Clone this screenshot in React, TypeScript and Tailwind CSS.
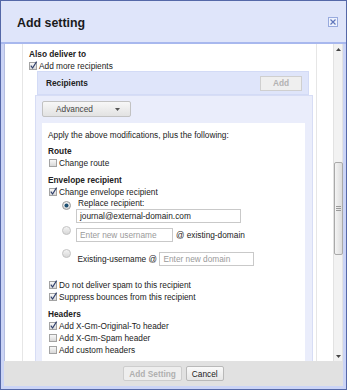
import React from 'react';

const Check = ({ on }: { on?: boolean }) => (
  <span className="relative w-[8px] h-[8px] shrink-0 border border-[#a3a3a3] bg-linear-to-b from-[#f8f8f8] to-[#d8d8d8]">
    {on && (
      <svg className="absolute -top-[2px] -left-px" width="9" height="9" viewBox="0 0 9 9">
        <path d="M1.8 4.6 L3.6 7 L7.6 0.6" fill="none" stroke="#33436e" strokeWidth="1.2" />
      </svg>
    )}
  </span>
);

const Radio = ({ on, className = '' }: { on?: boolean; className?: string }) => (
  <svg className={`shrink-0 ${className}`} width="9" height="9" viewBox="0 0 9 9">
    <defs>
      <linearGradient id="rg" x1="0" y1="0" x2="0" y2="1">
        <stop offset="0" stopColor="#f6f6f6" />
        <stop offset="1" stopColor="#d6d6d6" />
      </linearGradient>
    </defs>
    <circle cx="4.5" cy="4.5" r="4" fill="url(#rg)" stroke={on ? '#9a9a9a' : '#c4c4c4'} strokeWidth="1" />
    {on && <circle cx="4.5" cy="4.5" r="2" fill="#1d4f72" />}
  </svg>
);

const CheckRow = ({ on, label, className = '' }: { on?: boolean; label: string; className?: string }) => (
  <div className={`flex items-center h-[12px] ${className}`}>
    <Check on={on} />
    <span className="ml-[2px] whitespace-nowrap">{label}</span>
  </div>
);

const Field = ({ value, placeholder, className = '' }: { value?: string; placeholder?: string; className?: string }) => (
  <div className={`h-[14px] border border-[#c9c9c9] bg-white flex items-center pl-[3px] whitespace-nowrap ${className}`}>
    {value ? <span className="text-[#222]">{value}</span> : <span className="text-[#9a9a9a]">{placeholder}</span>}
  </div>
);

export default function App() {
  return (
    <div className="w-[347px] h-[390px] bg-[#5568a8] p-px font-['Liberation_Sans',Arial,sans-serif] text-[8.3px] leading-[12px] text-[#222]">
      <div className="h-full bg-[#cbd4f6] flex flex-col">
        {/* Header */}
        <div className="h-[43px] shrink-0 bg-[#dfe5fa] border-b-2 border-[#a8b8ee] flex items-center justify-between pl-[16px] pr-[8px] pt-[3px]">
          <span className="text-[12.4px] font-bold text-[#1a1a1a] leading-[14px]">Add setting</span>
          <div className="w-[10px] h-[10px] -mt-[3px] border border-[#98aade] bg-[#eef2fd] flex items-center justify-center">
            <svg width="6" height="6" viewBox="0 0 6 6">
              <path d="M0.5 0.5 L5.5 5.5 M5.5 0.5 L0.5 5.5" stroke="#5f76bb" strokeWidth="1.2" />
            </svg>
          </div>
        </div>

        {/* Scrolling content */}
        <div className="mx-[3px] h-[317px] shrink-0 bg-white border-l border-[#b6bfdf] flex overflow-hidden">
          <div className="w-[17px] shrink-0" />
          <div className="w-[295px] shrink-0 border-x border-[#e6e6e6] pt-[4px]">
            <div className="pl-[6px] font-bold">Also deliver to</div>
            <div className="pl-[6px] flex items-center h-[11px]">
              <Check on />
              <span className="ml-[2px]">Add more recipients</span>
            </div>

            {/* Recipients header */}
            <div className="ml-[14px] w-[272px] h-[24px] bg-[#dfe5fa] border border-[#d3dbf6] flex items-center justify-between pl-[8px] pr-[6px]">
              <span className="font-bold">Recipients</span>
              <div className="w-[42px] h-[15px] border border-[#cfcfcf] bg-[#efefef] flex items-center justify-center font-bold text-[#b3b3b3]">
                Add
              </div>
            </div>

            {/* Recipient details */}
            <div className="ml-[12px] w-[278px] h-[300px] bg-[#eaedfb] border border-[#d7ddf5] pl-[6px] pt-[5px]">
              <div className="w-[89px] h-[16px] border border-[#c2c2c2] rounded-[2px] bg-linear-to-b from-[#f7f7f7] to-[#e2e2e2] flex items-center pl-[13px] text-[#444]">
                <span>Advanced</span>
                <svg className="ml-[22px]" width="5" height="3" viewBox="0 0 5 3">
                  <path d="M0 0 L5 0 L2.5 3 Z" fill="#555" />
                </svg>
              </div>

              <div className="mt-[6px] w-[263px] h-[260px] bg-white px-[6px] pt-[6px]">
                <div className="whitespace-nowrap">Apply the above modifications, plus the following:</div>

                <div className="mt-[4px] font-bold">Route</div>
                <CheckRow className="pl-px" label="Change route" />

                <div className="mt-[5px] font-bold">Envelope recipient</div>
                <CheckRow className="pl-px" on label="Change envelope recipient" />

                {/* Replace recipient */}
                <div className="flex">
                  <div className="w-[28px] shrink-0 pl-[14px] pt-[2.5px]">
                    <Radio on />
                  </div>
                  <div>
                    <div className="h-[11px] leading-[11px] pl-[2px]">Replace recipient:</div>
                    <Field className="w-[165px]" value="journal@external-domain.com" />
                  </div>
                </div>

                {/* New username */}
                <div className="flex mt-[5px]">
                  <div className="w-[28px] shrink-0 pl-[14px] -mt-[2px]">
                    <Radio />
                  </div>
                  <div className="flex items-center">
                    <Field className="w-[97px]" placeholder="Enter new username" />
                    <span className="ml-[3px] whitespace-nowrap">@ existing-domain</span>
                  </div>
                </div>

                {/* New domain */}
                <div className="flex mt-[10px]">
                  <div className="w-[28px] shrink-0 pl-[14px] -mt-[3.5px]">
                    <Radio />
                  </div>
                  <div className="flex items-center">
                    <span className="pl-[1.5px] whitespace-nowrap">Existing-username @</span>
                    <Field className="ml-[2.5px] w-[95px]" placeholder="Enter new domain" />
                  </div>
                </div>

                <CheckRow className="pl-px mt-[13px]" on label="Do not deliver spam to this recipient" />
                <CheckRow className="pl-px" on label="Suppress bounces from this recipient" />

                <div className="mt-[5px] font-bold">Headers</div>
                <CheckRow className="pl-px" on label="Add X-Gm-Original-To header" />
                <CheckRow className="pl-px" label="Add X-Gm-Spam header" />
                <CheckRow className="pl-px" label="Add custom headers" />
              </div>
            </div>
          </div>
          <div className="w-[16px] shrink-0" />

          {/* Scrollbar */}
          <div className="w-[10px] shrink-0 bg-[#f2f2f2] border-x border-[#e2e2e2] flex flex-col items-center">
            <div className="h-[10px] flex items-center justify-center">
              <svg width="5" height="3" viewBox="0 0 5 3">
                <path d="M0 3 L5 3 L2.5 0 Z" fill="#444" />
              </svg>
            </div>
            <div className="mt-[108px] w-[9px] h-[93px] border border-[#a9a9a9] rounded-[2px] bg-linear-to-r from-[#f4f4f4] to-[#dcdcdc] flex flex-col items-center justify-center gap-px">
              <div className="w-[5px] h-px bg-[#9a9a9a]" />
              <div className="w-[5px] h-px bg-[#9a9a9a]" />
              <div className="w-[5px] h-px bg-[#9a9a9a]" />
            </div>
            <div className="flex-1" />
            <div className="h-[10px] flex items-center justify-center">
              <svg width="5" height="3" viewBox="0 0 5 3">
                <path d="M0 0 L5 0 L2.5 3 Z" fill="#444" />
              </svg>
            </div>
          </div>
        </div>

        {/* Footer */}
        <div className="mx-[3px] h-[25px] shrink-0 bg-[#e1e1e1] flex items-center justify-center gap-[4px]">
          <div className="h-[15px] px-[5px] border border-[#cdcdcd] bg-[#eeeeee] rounded-[2px] flex items-center font-bold text-[#b0b0b0]">
            Add Setting
          </div>
          <div className="h-[15px] px-[5px] border border-[#b9b9b9] bg-linear-to-b from-[#fafafa] to-[#e6e6e6] rounded-[2px] flex items-center text-[#222]">
            Cancel
          </div>
        </div>
      </div>
    </div>
  );
}
